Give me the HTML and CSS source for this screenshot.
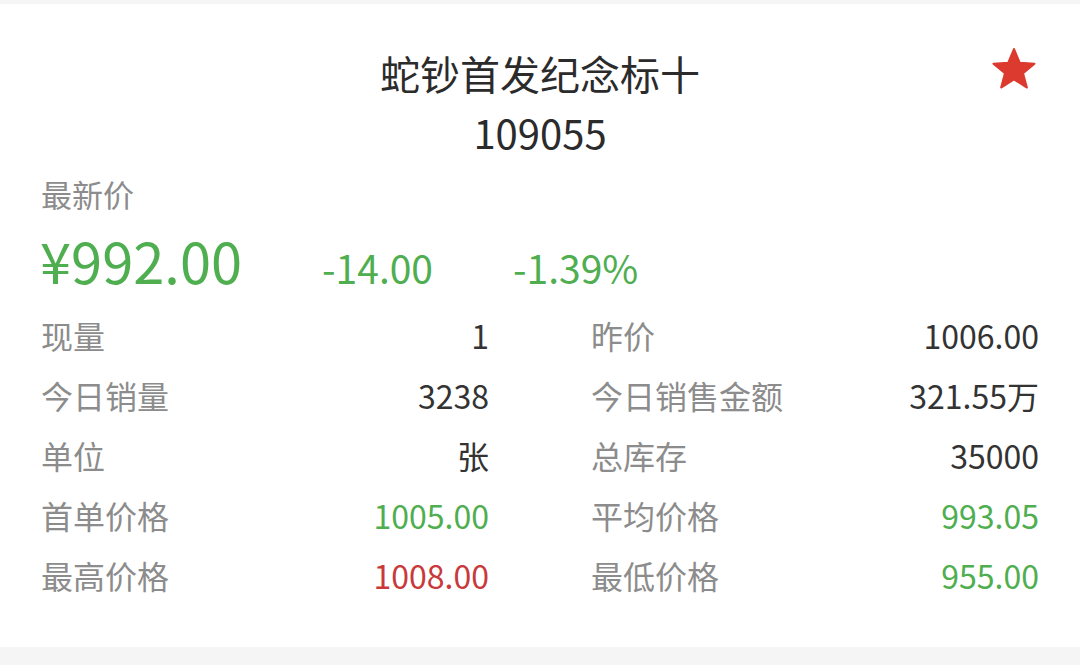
FILE: index.html
```html
<!DOCTYPE html>
<html lang="zh-CN">
<head>
    <meta charset="UTF-8">
    <title>蛇钞首发纪念标十</title>
    <link rel="stylesheet" href="styles.css">
</head>
<body>
    <!-- 行情卡片 -->
    <div class="card">
        <svg class="fav" viewBox="0 0 48 46" width="46" height="44">
            <polygon points="24,3 30,17.5 45.5,18.5 33.5,28.5 37.5,43.5 24,35 10.5,43.5 14.5,28.5 2.5,18.5 18,17.5" fill="#dc3a2f" stroke="#dc3a2f" stroke-width="2" stroke-linejoin="round"/>
        </svg>

        <h1 class="title">蛇钞首发纪念标十</h1>
        <div class="code">109055</div>

        <div class="label">最新价</div>
        <div class="price-row">
            <span class="price up-green">¥992.00</span>
            <span class="change up-green">-14.00</span>
            <span class="change up-green">-1.39%</span>
        </div>

        <div class="stats">
            <div class="stat"><span class="name">现量</span><span class="val">1</span></div>
            <div class="stat"><span class="name">昨价</span><span class="val">1006.00</span></div>
            <div class="stat"><span class="name">今日销量</span><span class="val">3238</span></div>
            <div class="stat"><span class="name">今日销售金额</span><span class="val">321.55万</span></div>
            <div class="stat"><span class="name">单位</span><span class="val">张</span></div>
            <div class="stat"><span class="name">总库存</span><span class="val">35000</span></div>
            <div class="stat"><span class="name">首单价格</span><span class="val green">1005.00</span></div>
            <div class="stat"><span class="name">平均价格</span><span class="val green">993.05</span></div>
            <div class="stat"><span class="name">最高价格</span><span class="val red">1008.00</span></div>
            <div class="stat"><span class="name">最低价格</span><span class="val green">955.00</span></div>
        </div>
    </div>
</body>
</html>
```

FILE: styles.css
```css
* {
    margin: 0;
    padding: 0;
    box-sizing: border-box;
}

body {
    font-family: "Noto Sans CJK SC", "Noto Sans", sans-serif;
    background: #f5f5f5;
    color: #333;
    padding: 4px 0 18px;
}

.card {
    position: relative;
    background: #fff;
    height: 643px;
    padding: 40px 41px 0 41px;
}

.fav {
    position: absolute;
    top: 42px;
    right: 43px;
}

.title {
    font-size: 40px;
    font-weight: 400;
    line-height: 58px;
    text-align: center;
    color: #2b2b2b;
}

.code {
    font-size: 40px;
    line-height: 60px;
    text-align: center;
    color: #2b2b2b;
}

.label {
    margin-top: 12px;
    font-size: 31px;
    line-height: 40px;
    color: #8c8c8c;
}

.price-row {
    display: flex;
    align-items: baseline;
    gap: 80px;
    height: 91px;
    line-height: 70px;
    padding-top: 11px;
}

.price {
    font-size: 56px;
    margin-left: -1px;
}

.change {
    font-size: 39px;
}

.up-green, .green {
    color: #4fae4f;
}

.red {
    color: #c9393b;
}

/* 明细 */
.stats {
    display: grid;
    grid-template-columns: 1fr 1fr;
    column-gap: 102px;
}

.stat {
    display: flex;
    justify-content: space-between;
    font-size: 32px;
    line-height: 60px;
}

.name {
    color: #8c8c8c;
}

.val {
    color: #333;
}

.val.green {
    color: #4fae4f;
}

.val.red {
    color: #c9393b;
}
```
